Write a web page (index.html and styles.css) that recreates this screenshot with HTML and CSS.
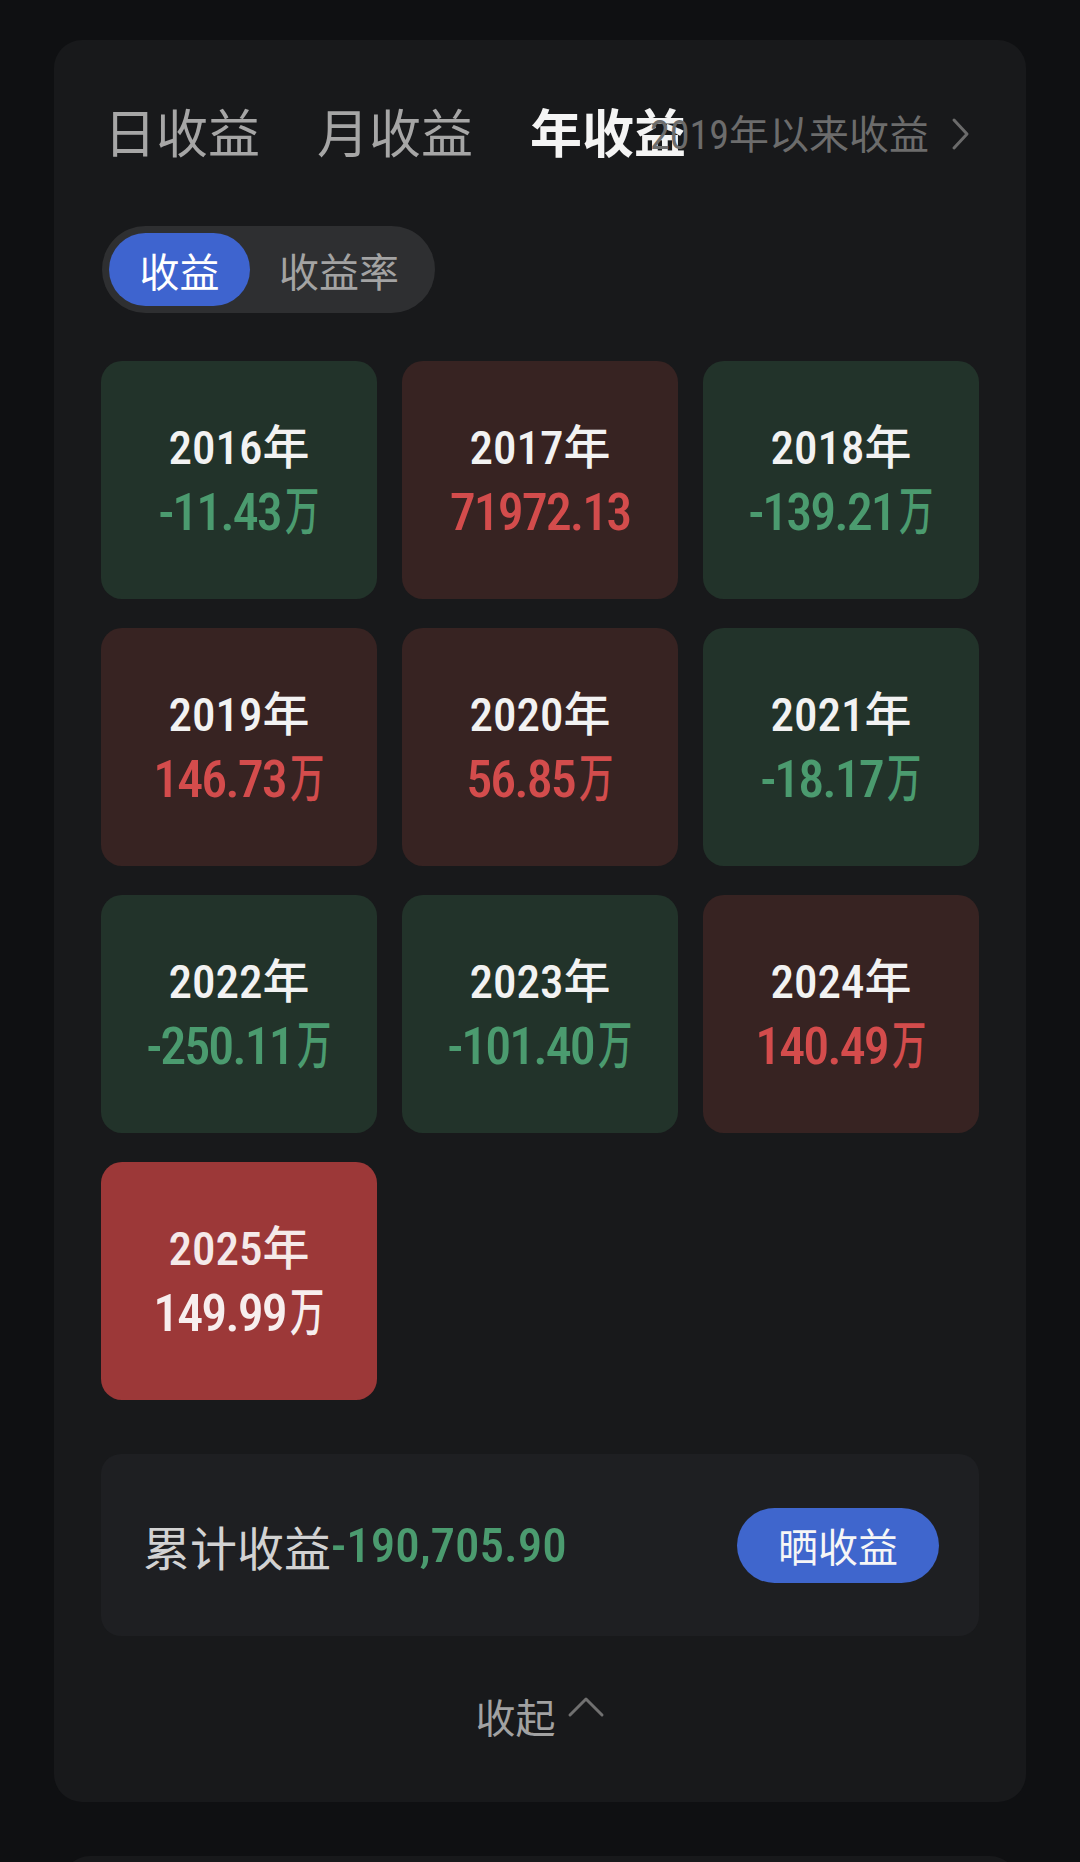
FILE: index.html
```html
<!DOCTYPE html>
<html lang="zh-CN">
<head>
<meta charset="utf-8">
<title>年收益</title>
<link rel="stylesheet" href="styles.css">
</head>
<body>
<div class="page">
  <section class="card">
    <div class="tabs">
      <div class="tab-list">
        <span class="tab">日收益</span>
        <span class="tab">月收益</span>
        <span class="tab active">年收益</span>
      </div>
      <div class="since">
        <span class="since-text"><span class="num">2019</span>年以来收益</span>
        <svg class="since-arrow" viewBox="0 0 22 34" width="22" height="34"><polyline points="5,3 18,17 5,31" fill="none" stroke="#6b6b6b" stroke-width="3" stroke-linecap="round" stroke-linejoin="round"/></svg>
      </div>
    </div>

    <div class="toggle">
      <span class="seg on">收益</span>
      <span class="seg">收益率</span>
    </div>

    <div class="grid">
      <div class="tile loss"><div class="year"><span class="num">2016</span>年</div><div class="val"><span class="num">-11.43</span><span class="wan">万</span></div></div>
      <div class="tile gain"><div class="year"><span class="num">2017</span>年</div><div class="val"><span class="num">71972.13</span></div></div>
      <div class="tile loss"><div class="year"><span class="num">2018</span>年</div><div class="val"><span class="num">-139.21</span><span class="wan">万</span></div></div>
      <div class="tile gain"><div class="year"><span class="num">2019</span>年</div><div class="val"><span class="num">146.73</span><span class="wan">万</span></div></div>
      <div class="tile gain"><div class="year"><span class="num">2020</span>年</div><div class="val"><span class="num">56.85</span><span class="wan">万</span></div></div>
      <div class="tile loss"><div class="year"><span class="num">2021</span>年</div><div class="val"><span class="num">-18.17</span><span class="wan">万</span></div></div>
      <div class="tile loss"><div class="year"><span class="num">2022</span>年</div><div class="val"><span class="num">-250.11</span><span class="wan">万</span></div></div>
      <div class="tile loss"><div class="year"><span class="num">2023</span>年</div><div class="val"><span class="num">-101.40</span><span class="wan">万</span></div></div>
      <div class="tile gain"><div class="year"><span class="num">2024</span>年</div><div class="val"><span class="num">140.49</span><span class="wan">万</span></div></div>
      <div class="tile hot"><div class="year"><span class="num">2025</span>年</div><div class="val"><span class="num">149.99</span><span class="wan">万</span></div></div>
    </div>

    <div class="summary">
      <div class="total"><span class="total-label">累计收益</span><span class="num total-val">-190,705.90</span></div>
      <button class="share">晒收益</button>
    </div>

    <div class="collapse">
      <span>收起</span>
      <svg class="up" viewBox="0 0 38 22" width="38" height="22"><polyline points="3,19 19,3 35,19" fill="none" stroke="#707070" stroke-width="3" stroke-linecap="round" stroke-linejoin="round"/></svg>
    </div>
  </section>
  <section class="card next"></section>
</div>
</body>
</html>
```

FILE: styles.css
```css
* { box-sizing: border-box; }

html, body {
  margin: 0;
  padding: 0;
  background: #0f1012;
}

body {
  font-family: "Noto Sans CJK SC", "Noto Sans", sans-serif;
  color: #f0f0f0;
  height: 1862px;
  overflow: hidden;
}

.page {
  padding: 40px 54px 0;
  display: flex;
  flex-direction: column;
  gap: 54px;
}

.card {
  background: #18191b;
  border-radius: 28px;
  padding: 47px 47px 56px;
}

.card.next {
  margin: 0 8px;
  height: 80px;
  padding: 0;
}

.num {
  font-family: "Liberation Sans Narrow", "Roboto Condensed", "DejaVu Sans Condensed", "Liberation Sans", sans-serif;
}

/* tabs */
.tabs {
  display: grid;
  height: 88px;
}

.tab-list {
  grid-area: 1 / 1;
  display: flex;
  gap: 57px;
  align-items: center;
  padding-left: 3px;
}

.tab {
  font-size: 52px;
  line-height: 88px;
  color: #a6a6a6;
}

.tab.active {
  color: #f4f4f4;
  font-weight: 700;
}

.since {
  grid-area: 1 / 1;
  justify-self: end;
  align-self: center;
  display: flex;
  align-items: center;
  gap: 20px;
  margin-right: 8px;
  margin-top: 6px;
  color: #6c6c6c;
  font-size: 40px;
  line-height: 48px;
}

.since-arrow { display: block; }

/* toggle */
.toggle {
  margin-top: 51px;
  display: inline-flex;
  padding: 7px;
  border-radius: 44px;
  background: #2e2f31;
  margin-left: 1px;
}

.seg {
  height: 73px;
  display: flex;
  align-items: center;
  justify-content: center;
  font-size: 40px;
  color: #a3a3a3;
  width: 178px;
  border-radius: 37px;
}

.seg.on {
  width: 141px;
  background: #3e64cf;
  color: #ffffff;
}

/* grid */
.grid {
  margin-top: 48px;
  display: grid;
  grid-template-columns: repeat(3, 1fr);
  grid-auto-rows: 238px;
  column-gap: 25px;
  row-gap: 29px;
}

.tile {
  border-radius: 21px;
  display: flex;
  flex-direction: column;
  align-items: center;
  justify-content: center;
}

.tile.loss { background: #22332a; }
.tile.gain { background: #372322; }
.tile.hot  { background: #9c3838; }

.year {
  font-size: 47px;
  line-height: 56px;
  color: #f2f2f2;
  font-weight: 500;
}

.val {
  font-size: 52px;
  line-height: 64px;
  font-weight: 500;
  white-space: nowrap;
}

.val .num {
  letter-spacing: -2px;
}

.loss .val { color: #4b9b6f; }
.gain .val { color: #d34c4c; }
.hot .val { color: #f7eeee; }
.hot .year { color: #f5e9e9; }

.wan {
  display: inline-block;
  transform: scaleX(0.66);
  transform-origin: left center;
  margin-left: 4px;
  margin-right: -17px;
  font-family: "Noto Sans CJK SC", sans-serif;
  font-weight: 500;
}

/* summary */
.summary {
  margin-top: 54px;
  height: 182px;
  background: #1e1f22;
  border-radius: 20px;
  padding: 0 40px 0 42px;
  display: flex;
  align-items: center;
  justify-content: space-between;
}

.total {
  display: flex;
  align-items: center;
  white-space: nowrap;
}

.total-label {
  font-size: 47px;
  color: #d2d2d2;
}

.total-val {
  font-size: 49px;
  color: #4b9b6f;
  font-weight: 500;
}

.share {
  width: 202px;
  height: 75px;
  border: none;
  border-radius: 38px;
  background: #3f66cd;
  color: #f6f6f6;
  font-family: "Noto Sans CJK SC", sans-serif;
  font-size: 40px;
  padding: 0;
}

/* collapse */
.collapse {
  margin-top: 50px;
  height: 60px;
  display: flex;
  align-items: center;
  justify-content: center;
  gap: 11px;
  font-size: 40px;
  color: #a2a2a2;
}

.collapse .up {
  display: block;
  margin-top: -18px;
}
```
